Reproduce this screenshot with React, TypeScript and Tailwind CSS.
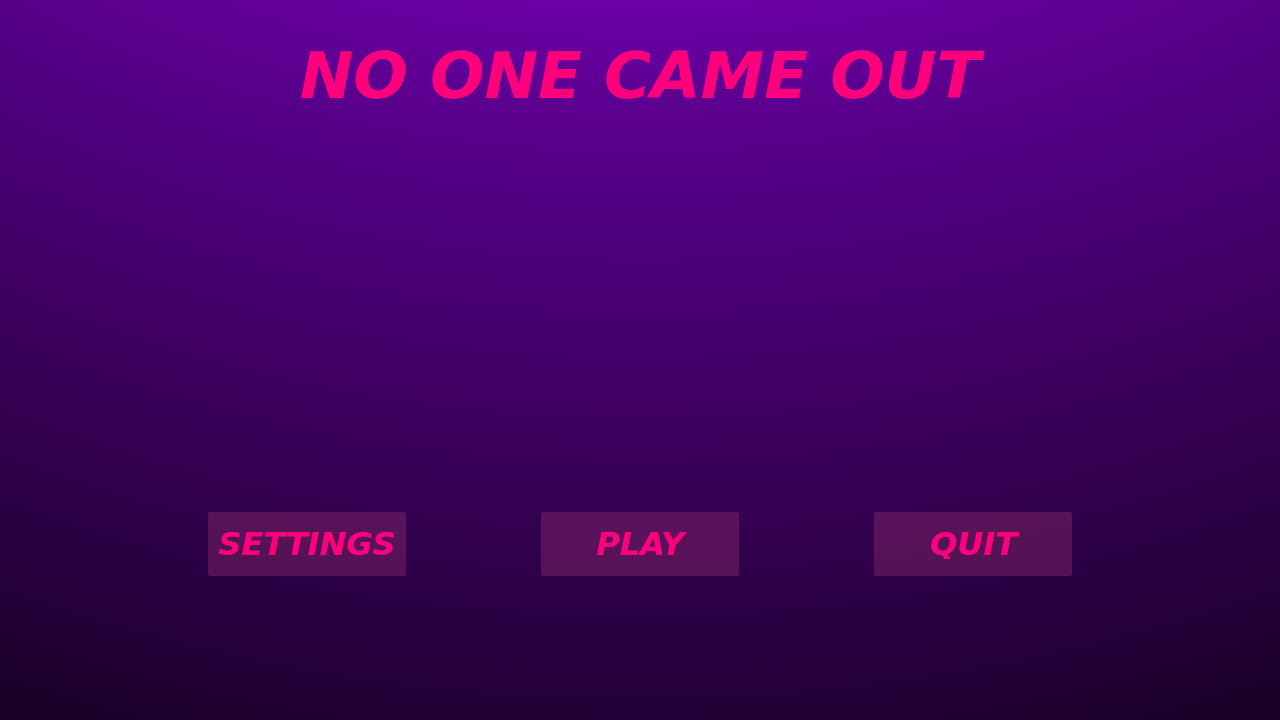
/**
 * Main menu of the game
 *
 * Shows the title at the top and a row of menu buttons near the bottom.
 */

const MENU_ITEMS = [
  { id: "settings", label: "SETTINGS" },
  { id: "play", label: "PLAY" },
  { id: "quit", label: "QUIT" },
];

function MenuButton({ label }: { label: string }) {
  return (
    <button
      type="button"
      className="h-16 w-[198px] rounded-xs bg-[#ff5f96]/19 text-[32px] leading-none text-[#ff007c] hover:bg-[#ff5f96]/30"
    >
      {label}
    </button>
  );
}

export default function App() {
  return (
    <main
      className="flex min-h-screen flex-col justify-between pt-11 pb-36 font-['DejaVu_Sans',sans-serif] font-bold italic
      bg-[radial-gradient(circle_at_50%_-167%,#6c00a8_59%,#5e0092_64%,#4f0080_70%,#44006a_77%,#360054_84%,#240038_94%,#190024_100%)]"
    >
      {/* Game title */}
      <h1 className="text-center text-[64px] leading-none text-[#ff007c]">NO ONE CAME OUT</h1>

      {/* Menu buttons */}
      <nav className="grid grid-cols-3 justify-items-center px-35">
        {MENU_ITEMS.map((item) => (
          <MenuButton key={item.id} label={item.label} />
        ))}
      </nav>
    </main>
  );
}
